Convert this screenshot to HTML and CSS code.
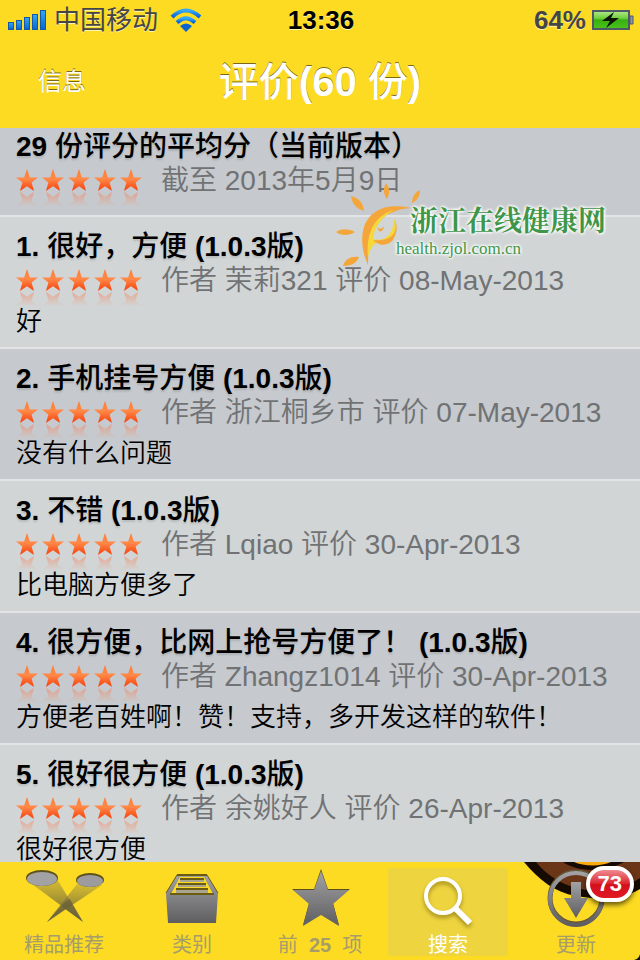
FILE: index.html
```html
<!DOCTYPE html>
<html lang="zh-CN">
<head>
    <meta charset="UTF-8">
    <meta name="viewport" content="width=device-width, initial-scale=1.0">
    <title>评价</title>
    <link rel="stylesheet" href="styles.css">
</head>
<body>
    <svg class="defs" width="0" height="0" aria-hidden="true">
        <defs>
            <linearGradient id="orange" x1="0" y1="0" x2="0" y2="1">
                <stop offset="0" stop-color="#ff7a30"/>
                <stop offset="0.45" stop-color="#ff8a48"/>
                <stop offset="1" stop-color="#f83c08"/>
            </linearGradient>
            <linearGradient id="mirror" x1="0" y1="0" x2="0" y2="1">
                <stop offset="0.35" stop-color="#ff8a58" stop-opacity="0"/>
                <stop offset="1" stop-color="#f87850" stop-opacity="0.5"/>
            </linearGradient>
            <linearGradient id="grey" x1="0" y1="0" x2="0" y2="1">
                <stop offset="0" stop-color="#a2a2a4"/>
                <stop offset="1" stop-color="#5e5e60"/>
            </linearGradient>
            <linearGradient id="blue" x1="0" y1="0" x2="0" y2="1">
                <stop offset="0" stop-color="#35a8f5"/>
                <stop offset="1" stop-color="#0664d8"/>
            </linearGradient>
            <linearGradient id="green" x1="0" y1="0" x2="0" y2="1">
                <stop offset="0" stop-color="#b4e88c"/>
                <stop offset="0.4" stop-color="#6fd03c"/>
                <stop offset="0.5" stop-color="#37b010"/>
                <stop offset="1" stop-color="#4cc41c"/>
            </linearGradient>
            <linearGradient id="beam" x1="0" y1="0" x2="0" y2="1">
                <stop offset="0" stop-color="#8c8248" stop-opacity="0.35"/>
                <stop offset="0.6" stop-color="#776c38" stop-opacity="0.75"/>
                <stop offset="1" stop-color="#5e5e50" stop-opacity="0.9"/>
            </linearGradient>
            <path id="star" d="M11 0 L13.8 8.4 L22 8.6 L15.6 13.6 L18 22 L11 17.2 L4 22 L6.4 13.6 L0 8.6 L8.2 8.4 Z"/>
            <g id="rate">
                <use href="#star" fill="url(#orange)"/>
                <use href="#star" fill="url(#mirror)" transform="translate(0 45) scale(1 -1)"/>
            </g>
            <symbol id="stars" viewBox="0 0 126 38">
                <use href="#rate"/>
                <use href="#rate" x="26"/>
                <use href="#rate" x="52"/>
                <use href="#rate" x="78"/>
                <use href="#rate" x="104"/>
            </symbol>
        </defs>
    </svg>

    <div class="status-bar">
        <div class="carrier">
            <svg width="40" height="22" viewBox="0 0 40 22" fill="url(#blue)" stroke="#1458a8" stroke-width="1">
                <rect x="0.5" y="13.5" width="5" height="7"/>
                <rect x="8.5" y="11.5" width="5" height="9"/>
                <rect x="16.5" y="8.5" width="5" height="12"/>
                <rect x="24.5" y="5.5" width="5" height="15"/>
                <rect x="32.5" y="1.5" width="5" height="19"/>
            </svg>
            <span>中国移动</span>
            <svg class="wifi" width="32" height="24" viewBox="0 0 32 24" fill="none" stroke="url(#blue)" stroke-width="4">
                <path d="M2 9 Q16 -4 30 9"/>
                <path d="M7 14.5 Q16 6 25 14.5"/>
                <path d="M10 18 Q16 13 22 18 L16 24 Z" fill="#0a64d0" stroke="none"/>
            </svg>
        </div>
        <div class="clock">13:36</div>
        <div class="power">
            <span>64%</span>
            <svg width="42" height="22" viewBox="0 0 42 22">
                <rect x="1" y="2" width="36" height="18" fill="url(#green)" stroke="#4e5866" stroke-width="2"/>
                <path d="M38 7 H41 V15 H38 Z" fill="#8d97a5" stroke="#4e5866"/>
                <path d="M22 3 L10 12 H18 L14 19 L27 9 H19 Z" fill="#0a1404"/>
            </svg>
        </div>
    </div>

    <header class="nav-bar">
        <button class="back">信息</button>
        <h1>评价<b>(60</b> 份<b>)</b></h1>
    </header>

    <main class="reviews">
        <section class="row summary">
            <h2><b>29</b> 份评分的平均分（当前版本）</h2>
            <div class="meta">
                <svg class="stars" role="img" aria-label="5 星"><use href="#stars"/></svg>
                <span>截至 2013年5月9日</span>
            </div>
        </section>
        <article class="row">
            <h2><b>1.</b> 很好，方便 <b>(1.0.3</b>版<b>)</b></h2>
            <div class="meta">
                <svg class="stars" role="img" aria-label="5 星"><use href="#stars"/></svg>
                <span>作者 茉莉321 评价 08-May-2013</span>
            </div>
            <p>好</p>
        </article>
        <article class="row">
            <h2><b>2.</b> 手机挂号方便 <b>(1.0.3</b>版<b>)</b></h2>
            <div class="meta">
                <svg class="stars" role="img" aria-label="5 星"><use href="#stars"/></svg>
                <span>作者 浙江桐乡市 评价 07-May-2013</span>
            </div>
            <p>没有什么问题</p>
        </article>
        <article class="row">
            <h2><b>3.</b> 不错 <b>(1.0.3</b>版<b>)</b></h2>
            <div class="meta">
                <svg class="stars" role="img" aria-label="5 星"><use href="#stars"/></svg>
                <span>作者 Lqiao 评价 30-Apr-2013</span>
            </div>
            <p>比电脑方便多了</p>
        </article>
        <article class="row">
            <h2><b>4.</b> 很方便，比网上抢号方便了！ <b>(1.0.3</b>版<b>)</b></h2>
            <div class="meta">
                <svg class="stars" role="img" aria-label="5 星"><use href="#stars"/></svg>
                <span>作者 Zhangz1014 评价 30-Apr-2013</span>
            </div>
            <p>方便老百姓啊！赞！支持，多开发这样的软件！</p>
        </article>
        <article class="row">
            <h2><b>5.</b> 很好很方便 <b>(1.0.3</b>版<b>)</b></h2>
            <div class="meta">
                <svg class="stars" role="img" aria-label="5 星"><use href="#stars"/></svg>
                <span>作者 余姚好人 评价 26-Apr-2013</span>
            </div>
            <p>很好很方便</p>
        </article>

        <div class="watermark">
            <svg width="84" height="84" viewBox="0 0 84 84" fill="#f5a63a">
                <path d="M50 0 C54 5 54 11 51 16 C47 11 47 5 50 0 Z"/>
                <path d="M15 13 C23 15 27 20 28 28 C21 26 16 21 15 13 Z"/>
                <path d="M84 7 C84 13 81 18 76 20 C76 14 79 9 84 7 Z"/>
                <path d="M0 49 C6 45 13 46 19 49 C13 53 5 53 0 49 Z"/>
                <path d="M7 83 C9 76 15 73 23 74 C21 80 15 83 7 83 Z"/>
                <path d="M75 25 C54 20 36 25 29 41 C24 54 26 69 32 82 C32 65 34 50 42 40 C50 30 62 26 75 25 Z"/>
                <path d="M32 74 C30 52 37 33 58 27 C45 34 38 45 37 56 C48 59 57 53 58 36 C63 48 57 59 43 59 C38 60 34 65 32 74 Z" fill="#f5d93a"/>
                <path d="M58 36 C63 48 57 59 37 57 C43 64 54 63 58 55 C61 49 62 42 58 36 Z"/>
                <path d="M41 44 Q45 48 48 43 Q47 50 43 48 Z"/>
            </svg>
            <div class="watermark-text">
                <strong>浙江在线健康网</strong>
                <span>health.zjol.com.cn</span>
            </div>
        </div>
    </main>

    <nav class="tab-bar">
        <svg class="backdrop" width="116" height="98" viewBox="0 0 116 98" aria-hidden="true">
            <path d="M0 0 C15 18 30 30 52 34 C80 39 101 36 116 27 V0 Z" fill="#160b03"/>
            <path d="M12 0 C25 16 42 25 62 28 C82 30 101 26 116 16 V0 Z" fill="#6b3517"/>
            <path d="M39 0 C51 9 78 12 100 0 Z" fill="#160b03"/>
            <path d="M50 0 C59 4 76 5 87 0 Z" fill="#f9ac10"/>
            <path d="M116 92 V98 H110 Q115 97 116 92 Z" fill="#111"/>
        </svg>
        <button class="tab">
            <svg width="80" height="59" viewBox="0 0 80 59">
                <path d="M8 15 L33 10 L59 53 Z" fill="url(#beam)"/>
                <path d="M53 15 L78 16 L23 53 Z" fill="url(#beam)"/>
                <path d="M41 33 L46 30 L59 53 L41 40 L23 53 Z" fill="#5e5638" opacity="0.5"/>
                <ellipse cx="18" cy="9" rx="16" ry="8" fill="#5d511c"/>
                <ellipse cx="18" cy="10" rx="15" ry="7" fill="#a2a2a5"/>
                <ellipse cx="66" cy="11" rx="14" ry="7" fill="#5d511c"/>
                <ellipse cx="66" cy="12" rx="13" ry="6" fill="#9c9c9f"/>
            </svg>
            <span>精品推荐</span>
        </button>
        <button class="tab">
            <svg width="54" height="59" viewBox="0 0 54 59">
                <path d="M12 6 H42 L53 24 L51 54 H3 L1 24 Z" fill="url(#grey)"/>
                <path d="M15 8 H39 L48 25 H6 Z" fill="#fddb22"/>
                <path d="M15 10 H39 V13 H15 Z M13 15 H41 V18 H13 Z M11 20 H43 V24 H11 Z" fill="#aaa58e"/>
                <path d="M12 6 H42 M15 10 H39 M13 15 H41 M11 20 H43 M5 25 H49" fill="none" stroke="#6c5c12" stroke-width="2"/>
                <path d="M12 6 L1 24 M42 6 L53 24" stroke="#6c5c12"/>
            </svg>
            <span>类别</span>
        </button>
        <button class="tab">
            <svg width="60" height="60" viewBox="0 0 60 60">
                <path d="M31 1 L38 21 H60 L43 35 L49 57 L31 45 L13 57 L19 35 L2 21 H24 Z" fill="#5c5016"/>
                <path d="M31 3 L38 22 H59 L43 36 L49 58 L31 47 L13 58 L19 36 L3 22 H24 Z" fill="url(#grey)"/>
            </svg>
            <span>前&nbsp; <b>25</b> &nbsp;项</span>
        </button>
        <button class="tab active">
            <svg width="56" height="56" viewBox="0 0 56 56" fill="none" stroke="#fff">
                <circle cx="23" cy="24" r="17" stroke-width="4"/>
                <path d="M35 36 L50 51" stroke-width="6"/>
            </svg>
            <span>搜索</span>
        </button>
        <button class="tab">
            <svg width="58" height="60" viewBox="0 0 58 60">
                <circle cx="29" cy="30" r="26" fill="none" stroke="#66583a" stroke-width="5"/>
                <circle cx="29" cy="31" r="26" fill="none" stroke="url(#grey)" stroke-width="4"/>
                <path d="M24 14 H34 V30 H41 L29 50 L17 30 H24 Z" fill="url(#grey)"/>
            </svg>
            <span>更新</span>
            <span class="badge">73</span>
        </button>
    </nav>
</body>
</html>
```
FILE: styles.css
```css
* {
    box-sizing: border-box;
}

body {
    display: flex;
    flex-direction: column;
    height: 100vh;
    margin: 0;
    overflow: hidden;
    background: #fddb22;
    color: #000;
    font-family: "Liberation Sans", "Noto Sans CJK SC", sans-serif;
}

button {
    padding: 0;
    border: none;
    background: none;
    font-family: inherit;
    cursor: pointer;
}

h1, h2, p {
    margin: 0;
}

.defs {
    position: absolute;
}

.status-bar {
    display: grid;
    grid-template-columns: 1fr auto 1fr;
    align-items: center;
    height: 40px;
    padding: 0 6px 0 8px;
    font-size: 26px;
    line-height: 40px;
    text-shadow: 0 1px 0 #fff3b0;
}

.carrier, .power {
    display: flex;
    align-items: center;
    gap: 6px;
    color: #454545;
}

.wifi {
    margin-left: 6px;
}

.clock {
    font-weight: bold;
}

.power {
    justify-content: flex-end;
    font-weight: bold;
}

.nav-bar {
    display: grid;
    grid-template-columns: 1fr auto 1fr;
    align-items: center;
    height: 88px;
    padding: 0 38px 4px;
    color: #fff;
    text-shadow: 0 -1px 0 #7a6a18;
}

.back {
    justify-self: start;
    color: #fff;
    font-size: 24px;
    line-height: 28px;
    text-shadow: inherit;
}

.nav-bar h1 {
    font-size: 40px;
    line-height: 48px;
    font-weight: 500;
}

.reviews {
    position: relative;
    flex: 1;
    min-height: 0;
    overflow: hidden;
}

.row {
    padding: 13px 16px 8px;
    border-bottom: 2px solid #e2e4e6;
    background: #d1d5d6;
}

.row:nth-child(odd) {
    background: #c6c9cd;
}

.summary {
    padding: 2px 16px 17px;
}

.row h2 {
    font-size: 28px;
    line-height: 34px;
    font-weight: 500;
    white-space: nowrap;
    text-shadow: 0 2px 2px rgba(0, 0, 0, 0.12);
}

.meta {
    display: flex;
    gap: 19px;
    height: 34px;
    color: #707274;
    font-size: 28px;
    line-height: 34px;
    font-weight: 350;
    white-space: nowrap;
}

.stars {
    flex: none;
    width: 126px;
    height: 38px;
    margin-top: 5px;
}

.row p {
    margin-top: 5px;
    font-size: 26px;
    line-height: 36px;
    font-weight: 350;
}

.watermark {
    position: absolute;
    top: 55px;
    left: 336px;
    display: flex;
}

.watermark-text {
    display: flex;
    flex-direction: column;
    margin: 18px 0 0 -24px;
    color: #3f9648;
    white-space: nowrap;
    text-shadow: 0 0 3px #fff, 0 0 3px #fff, 0 0 3px #fff, 0 0 4px #fff;
}

.watermark-text strong {
    margin-left: 14px;
    font-family: "Noto Serif CJK SC", "Noto Sans CJK SC", serif;
    font-size: 28px;
    line-height: 36px;
}

.watermark-text span {
    font-family: "Liberation Serif", serif;
    font-size: 17px;
    line-height: 24px;
}

.tab-bar {
    position: relative;
    display: grid;
    grid-template-columns: repeat(5, 1fr);
    height: 98px;
}

.backdrop {
    position: absolute;
    top: 0;
    right: 0;
}

.tab {
    position: relative;
    display: flex;
    flex-direction: column;
    align-items: center;
    justify-content: flex-end;
    margin: 6px 4px 4px;
    border-radius: 4px;
    color: #a69d69;
    font-size: 20px;
    line-height: 22px;
}

.tab svg {
    margin-bottom: 6px;
}

.tab.active {
    background: #eed53f;
    color: #fff;
}

.tab.active svg {
    filter: drop-shadow(0 3px 2px rgba(90, 70, 0, 0.5));
}

.badge {
    position: absolute;
    top: -2px;
    right: 2px;
    padding: 5px 8px;
    border: 4px solid #fff;
    border-radius: 18px;
    background: linear-gradient(#f08a90, #dc2832 48%, #d4101c 52%, #e01824);
    box-shadow: 0 3px 5px rgba(0, 0, 0, 0.6);
    color: #fff;
    font-size: 22px;
    line-height: 18px;
    font-weight: bold;
}
```
